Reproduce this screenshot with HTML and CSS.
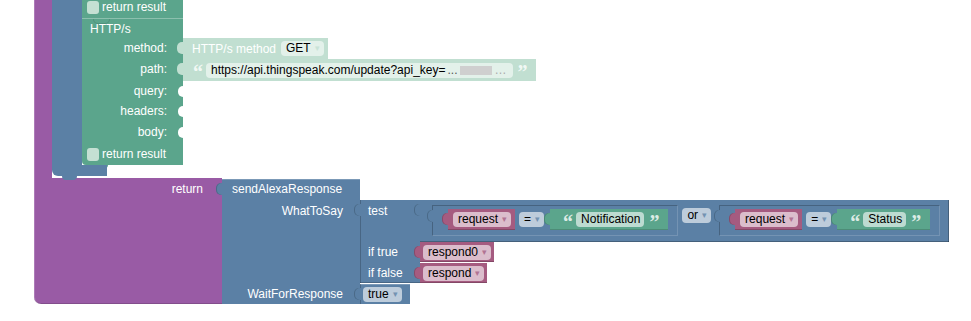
FILE: index.html
```html
<!DOCTYPE html>
<html lang="en">
<head>
    <meta charset="UTF-8">
    <meta name="viewport" content="width=device-width, initial-scale=1.0">
    <title>Alexa HTTP blocks</title>
    <link rel="stylesheet" href="styles.css">
</head>
<body>
    <div class="canvas">
        <div class="proc">
            <div class="proc-body">
                <div class="proc-rail"></div>
                <div class="ctrl">
                    <div class="ctrl-main">
                        <div class="ctrl-rail"></div>
                        <div class="http">
                            <div class="row row-prev"><span class="check"></span><span>return result</span></div>
                            <div class="row row-head">HTTP/s</div>
                            <div class="row">
                                <div class="label">method:</div>
                                <div class="val shadow">HTTP/s method <span class="field">GET<span class="arrow">▾</span></span></div>
                            </div>
                            <div class="row row-tall">
                                <div class="label">path:</div>
                                <div class="val shadow shadow-url">
                                    <span class="q">“</span>
                                    <span class="field field-url">https://api.thingspeak.com/update?api_key=<span class="dim">...</span><span class="blur"></span><span class="dim2">…</span></span>
                                    <span class="q">”</span>
                                </div>
                            </div>
                            <div class="row row-short"><div class="label empty">query:</div></div>
                            <div class="row"><div class="label empty">headers:</div></div>
                            <div class="row"><div class="label empty">body:</div></div>
                            <div class="row row-last"><span class="check"></span><span>return result</span></div>
                        </div>
                    </div>
                    <div class="ctrl-foot"></div>
                </div>
            </div>

            <div class="proc-foot">
                <div class="proc-label">return</div>
                <div class="val send">
                    <div class="title">sendAlexaResponse</div>
                    <div class="srow srow-say">
                        <div class="slabel">WhatToSay</div>
                        <div class="val tern">
                            <div class="trow trow-test">
                                <div class="tlabel">test</div>
                                <div class="val or">
                                    <div class="val cmp">
                                        <div class="val var"><span class="field">request<span class="arrow">▾</span></span></div>
                                        <span class="field op">=<span class="arrow">▾</span></span>
                                        <div class="val txt"><span class="q">“</span><span class="field">Notification</span><span class="q">”</span></div>
                                    </div>
                                    <span class="field or-op">or<span class="arrow">▾</span></span>
                                    <div class="val cmp">
                                        <div class="val var"><span class="field">request<span class="arrow">▾</span></span></div>
                                        <span class="field op">=<span class="arrow">▾</span></span>
                                        <div class="val txt"><span class="q">“</span><span class="field">Status</span><span class="q">”</span></div>
                                    </div>
                                </div>
                            </div>
                            <div class="trow trow-true">
                                <div class="tlabel">if true</div>
                                <div class="val var"><span class="field">respond0<span class="arrow">▾</span></span></div>
                            </div>
                            <div class="trow trow-false">
                                <div class="tlabel">if false</div>
                                <div class="val var"><span class="field">respond<span class="arrow">▾</span></span></div>
                            </div>
                        </div>
                    </div>
                    <div class="srow srow-wait">
                        <div class="slabel">WaitForResponse</div>
                        <div class="val bool"><span class="field">true<span class="arrow">▾</span></span></div>
                    </div>
                </div>
            </div>
        </div>
    </div>
</body>
</html>
```

FILE: styles.css
```css
* {
    box-sizing: border-box;
}
body {
    margin: 0;
    background-color: #fff;
    font-family: "Liberation Sans", Arial, sans-serif;
    font-size: 12px;
    color: #fff;
    overflow: hidden;
}
.canvas {
    width: 971px;
    height: 321px;
    padding-left: 34px;
    overflow: hidden;
}

/* shared block parts */
.val {
    position: relative;
    background-color: var(--c);
    white-space: nowrap;
}
.val::before {
    content: '';
    position: absolute;
    left: -6px;
    top: 4px;
    width: 7px;
    height: 12px;
    background-color: var(--c);
    border-radius: 5px 0 0 5px;
    box-shadow: inset 1px 0 rgba(0, 0, 0, 0.18);
}
.field {
    display: inline-flex;
    align-items: center;
    gap: 4px;
    height: 15px;
    padding: 0 4px 0 5px;
    line-height: 15px;
    border-radius: 4px;
    background-color: rgba(255, 255, 255, 0.6);
    color: #000;
}
.arrow {
    font-size: 9px;
    color: var(--c);
    opacity: 0.75;
}
.q {
    display: inline-block;
    width: 8px;
    height: 14px;
    font-family: "Liberation Serif", serif;
    font-weight: bold;
    font-size: 20px;
    line-height: 18px;
    text-align: center;
    color: rgba(255, 255, 255, 0.8);
}

/* procedure (purple) */
.proc {
    display: flex;
    flex-direction: column;
}
.proc-body {
    display: flex;
    height: 178px;
}
.proc-rail {
    width: 18px;
    background-color: #995ba5;
    box-shadow: inset 1px 0 rgba(255, 255, 255, 0.2);
}
.proc-foot {
    display: flex;
    align-items: flex-start;
}
.proc-label {
    width: 188px;
    height: 126px;
    padding: 4px 19px 0 0;
    line-height: 15px;
    text-align: right;
    background-color: #995ba5;
    border-radius: 0 0 0 7px;
    box-shadow: inset 1px 0 rgba(255, 255, 255, 0.2), inset 0 -1px rgba(0, 0, 0, 0.15);
}

/* blue statement holder */
.ctrl {
    display: flex;
    flex-direction: column;
}
.ctrl-main {
    display: flex;
    height: 165px;
}
.ctrl-rail {
    width: 30px;
    background-color: #5b80a5;
}
.ctrl-foot {
    position: relative;
    width: 55px;
    height: 11px;
    background-color: #5b80a5;
    border-radius: 0 0 0 6px;
    box-shadow: 0 1px #fff;
}
.ctrl-foot::after {
    content: '';
    position: absolute;
    left: 10px;
    bottom: -4px;
    width: 15px;
    height: 4px;
    background-color: #5b80a5;
    border-radius: 0 0 5px 5px;
}

/* HTTP/s block (green) */
.http {
    --c: #5ba58c;
    width: 101px;
    background-color: #5ba58c;
    border-radius: 0 0 0 4px;
}
.http .row {
    display: flex;
    align-items: center;
    height: 21px;
}
.http .row-prev {
    height: 22px;
    margin-top: -4px;
}
.http .row-tall {
    height: 22px;
}
.http .row-short {
    height: 20px;
}
.http .row-last {
    position: relative;
    height: 22px;
}
.http .row-last::after {
    content: '';
    position: absolute;
    left: 13px;
    bottom: -3px;
    width: 13px;
    height: 3px;
    background-color: #5ba58c;
    border-radius: 0 0 4px 4px;
}
.http .row-head {
    position: relative;
    height: 20px;
    padding-left: 8px;
    border-top: 1px solid rgba(255, 255, 255, 0.3);
}
.http .row-head::before {
    content: '';
    position: absolute;
    left: 11px;
    top: 0;
    width: 15px;
    height: 4px;
    border: 1px solid rgba(0, 0, 0, 0.12);
    border-top: none;
    border-radius: 0 0 5px 5px;
}
.check {
    width: 12px;
    height: 13px;
    margin: 0 3px 0 5px;
    border-radius: 3px;
    background-color: #c4e0d3;
}
.label {
    position: relative;
    flex: 0 0 101px;
    height: 100%;
    padding-right: 16px;
    text-align: right;
    line-height: 21px;
}
.label.empty::after {
    content: '';
    position: absolute;
    right: 0;
    top: 5px;
    width: 5px;
    height: 11px;
    background-color: #fff;
    border-radius: 5px 0 0 5px;
}
.shadow {
    --c: #c1dfd1;
    display: flex;
    align-items: center;
    gap: 5px;
    height: 21px;
    padding: 0 4px 0 9px;
}
.shadow::before {
    box-shadow: none;
}
.shadow .field {
    background-color: rgba(255, 255, 255, 0.55);
}
.shadow-url {
    height: 22px;
    gap: 5px;
    padding: 0 10px 0 10px;
}
.field-url {
    gap: 0;
    padding: 0 6px 0 5px;
}
.dim {
    color: #555;
    padding: 0 2px 0 2px;
}
.blur {
    display: inline-block;
    width: 32px;
    height: 9px;
    background-color: #cfcfcf;
}
.dim2 {
    color: #aaa;
    padding-left: 3px;
}

/* sendAlexaResponse */
.send {
    --c: #5b80a5;
    display: flex;
    flex-direction: column;
    width: 138px;
    margin-top: 1px;
    box-shadow: inset 0 1px rgba(255, 255, 255, 0.2);
}
.send .title {
    height: 21px;
    padding-left: 10px;
    line-height: 21px;
}
.srow {
    display: flex;
}
.srow-say {
    height: 83px;
}
.srow-wait {
    height: 21px;
}
.slabel {
    flex: 0 0 138px;
    padding: 4px 17px 0 0;
    line-height: 15px;
    text-align: right;
}
.bool {
    --c: #5b80a5;
    height: 20px;
    margin-top: 1px;
    padding: 3px 8px 0 3px;
    box-shadow: inset 1px 0 rgba(0, 0, 0, 0.2), inset 0 1px rgba(255, 255, 255, 0.2);
}

/* ternary */
.tern {
    --c: #5b80a5;
    display: flex;
    flex-direction: column;
    width: 60px;
    box-shadow: inset 1px 0 rgba(0, 0, 0, 0.2), inset 0 -1px rgba(0, 0, 0, 0.2);
}
.trow {
    display: flex;
}
.trow-test {
    height: 42px;
}
.trow-true {
    height: 21px;
}
.trow-false {
    height: 20px;
}
.tlabel {
    flex: 0 0 60px;
    padding: 4px 0 0 8px;
    line-height: 15px;
}
.trow-true .tlabel,
.trow-false .tlabel {
    padding-top: 3px;
}
.tern .trow > .var {
    height: 20px;
    padding: 0 3px 0 3px;
}

/* or / compare */
.or {
    --c: #5b80a5;
    display: flex;
    align-items: flex-start;
    gap: 4px;
    height: 42px;
    padding: 5px 9px 0 12px;
    box-shadow: inset 0 -1px rgba(0, 0, 0, 0.25), inset -1px 0 rgba(0, 0, 0, 0.25);
}
.or-op {
    margin: 3px 4px 0 0;
}
.cmp {
    --c: #5b80a5;
    display: flex;
    align-items: flex-start;
    height: 31px;
    padding: 3px 9px 0 15px;
    border: 1px solid rgba(0, 0, 0, 0.22);
    border-right-color: rgba(255, 255, 255, 0.15);
    border-bottom-color: rgba(255, 255, 255, 0.15);
}
.cmp .op {
    margin: 3px 6px 0 4px;
}
.var {
    --c: #a55b80;
    display: flex;
    align-items: center;
    height: 21px;
    padding: 0 4px 0 5px;
    box-shadow: inset 0 -1px rgba(0, 0, 0, 0.2);
}
.txt {
    --c: #5ba58c;
    display: flex;
    align-items: center;
    gap: 5px;
    height: 21px;
    padding: 0 11px 0 13px;
    box-shadow: inset 0 -1px rgba(0, 0, 0, 0.15);
}
```
